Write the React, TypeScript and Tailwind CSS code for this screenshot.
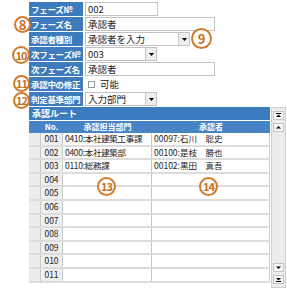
const font = { fontFamily: '"Noto Sans CJK JP", "DejaVu Sans", sans-serif' }

type FieldRow = { label: string; kind: 'input' | 'select' | 'check'; value: string; width: string }

const fields: FieldRow[] = [
  { label: 'フェーズ№', kind: 'input', value: '002', width: 'w-[73px]' },
  { label: 'フェーズ名', kind: 'input', value: '承認者', width: 'w-[130px]' },
  { label: '承認者種別', kind: 'select', value: '承認者を入力', width: 'w-[105px]' },
  { label: '次フェーズ№', kind: 'select', value: '003', width: 'w-[72px]' },
  { label: '次フェーズ名', kind: 'input', value: '承認者', width: 'w-[130px]' },
  { label: '承認中の修正', kind: 'check', value: '可能', width: 'w-[72px]' },
  { label: '判定基準部門', kind: 'select', value: '入力部門', width: 'w-[72px]' },
]

const routes = [
  { no: '001', dept: '0410:本社建築工事課', user: '00097:石川　聡史' },
  { no: '002', dept: '0400:本社建築部', user: '00100:是枝　勝也' },
  { no: '003', dept: '0110:総務課', user: '00102:黒田　真吾' },
  { no: '004', dept: '', user: '' },
  { no: '005', dept: '', user: '' },
  { no: '006', dept: '', user: '' },
  { no: '007', dept: '', user: '' },
  { no: '008', dept: '', user: '' },
  { no: '009', dept: '', user: '' },
  { no: '010', dept: '', user: '' },
  { no: '011', dept: '', user: '' },
]

function Marker({ n, className }: { n: number; className: string }) {
  return (
    <div
      className={`absolute flex items-center justify-center rounded-full border-2 border-[#d07a2c] bg-white/60 font-bold leading-none text-[#c96f22] ${className}`}
    >
      {n}
    </div>
  )
}

function DropButton() {
  return (
    <div className="flex h-full w-[11px] items-center justify-center border-l border-[#c8c8c8] bg-[#eeeeee]">
      <svg width="5" height="3" viewBox="0 0 5 3">
        <path d="M0 0h5L2.5 3z" fill="#000" />
      </svg>
    </div>
  )
}

function ScrollButton({ dir, bar }: { dir: 'up' | 'down'; bar?: boolean }) {
  return (
    <div className="flex h-[9px] w-[11px] items-center justify-center border border-[#c4c4c4] bg-[#f7f7f7]">
      <svg width="5" height="5" viewBox="0 0 5 5">
        {dir === 'up' ? (
          <>
            {bar && <rect x="0" y="0" width="5" height="1" fill="#000" />}
            <path d={bar ? 'M0 4h5L2.5 1.5z' : 'M0 3.5h5L2.5 1z'} fill="#000" />
          </>
        ) : (
          <>
            <path d={bar ? 'M0 1h5L2.5 3.5z' : 'M0 1.5h5L2.5 4z'} fill="#000" />
            {bar && <rect x="0" y="4" width="5" height="1" fill="#000" />}
          </>
        )}
      </svg>
    </div>
  )
}

export default function App() {
  return (
    <div className="relative h-[288px] w-[287px] overflow-hidden bg-white text-[9.5px]" style={font}>
      <div className="ml-[29px] flex flex-col gap-[1px] pt-[2px]">
        {fields.map((f) => (
          <div key={f.label} className="flex h-[14px] items-stretch gap-[2px]">
            <div className="w-[54px] overflow-hidden whitespace-nowrap bg-[#3d7bbd] pl-[2px] text-[8.5px] font-bold leading-[14px] tracking-[-0.3px] text-white">
              {f.label}
            </div>
            {f.kind === 'check' ? (
              <div className="flex items-center gap-[5px] pl-[3px]">
                <span className="h-[7px] w-[7px] border border-[#9a9a9a] bg-white" />
                <span className="text-[#222]">{f.value}</span>
              </div>
            ) : (
              <div className={`flex ${f.width} items-stretch border border-[#c2c2c2] bg-white`}>
                <span className="flex-1 overflow-hidden whitespace-nowrap pl-[2px] leading-[12px] text-[#222]">{f.value}</span>
                {f.kind === 'select' && <DropButton />}
              </div>
            )}
          </div>
        ))}
      </div>

      <div className="ml-[29px] mt-[1px] flex h-[181px]">
        <div className="flex w-[241px] flex-col">
          <div className="h-[13px] bg-[#3c7bbd] pl-[3px] text-[9px] font-bold leading-[13px] text-white">承認ルート</div>
          <div className="mt-[1px] flex h-[12px] bg-[#4784c6] text-[8px] font-bold leading-[12px] text-white">
            <div className="w-[11px]" />
            <div className="w-[23px] text-center">No.</div>
            <div className="w-[89px] text-center">承認担当部門</div>
            <div className="flex-1 text-center">承認者</div>
          </div>
          {routes.map((r) => (
            <div key={r.no} className="flex h-[13.6px] border-b-2 border-[#dcdcdc] text-[8.5px] leading-[11px] text-[#222]">
              <div className="w-[11px] bg-[#ececec]" />
              <div className="w-[23px] border-x border-[#c8c8c8] bg-[#efefef] text-center">{r.no}</div>
              <div className="w-[89px] overflow-hidden whitespace-nowrap border-r border-[#c8c8c8] pl-[2px] tracking-[-0.3px]">{r.dept}</div>
              <div className="flex-1 whitespace-pre border-r border-[#c8c8c8] pl-[2px]">{r.user}</div>
            </div>
          ))}
        </div>
        <div className="ml-[1px] flex w-[15px] flex-col items-center justify-between border border-[#cfcfcf] bg-[#ececec] py-[3px]">
          <div className="flex flex-col gap-[3px]">
            <ScrollButton dir="up" bar />
            <ScrollButton dir="up" />
          </div>
          <div className="flex flex-col gap-[3px]">
            <ScrollButton dir="down" />
            <ScrollButton dir="down" bar />
          </div>
        </div>
      </div>

      <Marker n={8} className="left-[14px] top-[16px] h-[17px] w-[17px] text-[13px]" />
      <Marker n={9} className="left-[191px] top-[28px] h-[21px] w-[21px] text-[13px]" />
      <Marker n={10} className="left-[12px] top-[46px] h-[18px] w-[18px] text-[11px] tracking-[-1px]" />
      <Marker n={11} className="left-[13px] top-[75px] h-[17px] w-[17px] text-[11px] tracking-[-1px]" />
      <Marker n={12} className="left-[13px] top-[92px] h-[17px] w-[17px] text-[11px] tracking-[-1px]" />
      <Marker n={13} className="left-[97px] top-[177px] h-[19px] w-[19px] text-[11px] tracking-[-1px]" />
      <Marker n={14} className="left-[199px] top-[177px] h-[19px] w-[19px] text-[11px] tracking-[-1px]" />
    </div>
  )
}
